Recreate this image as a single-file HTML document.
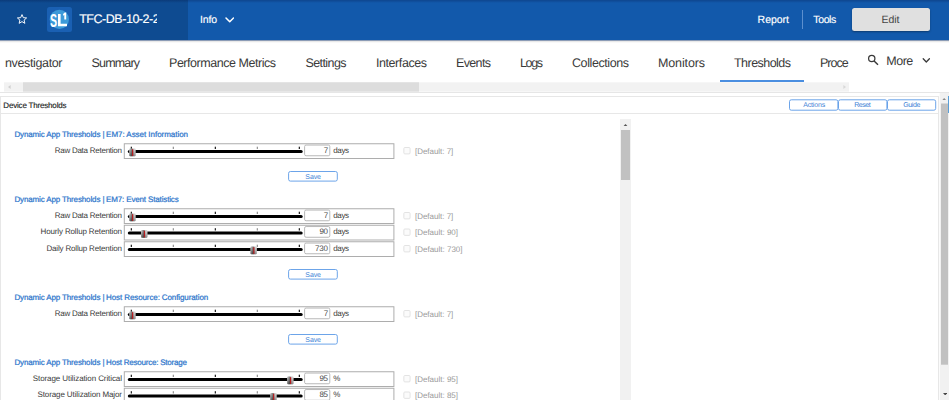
<!DOCTYPE html>
<html><head><meta charset="utf-8">
<style>
html,body{margin:0;padding:0;background:#fff;}
body{width:949px;height:400px;position:relative;overflow:hidden;font-family:"Liberation Sans",sans-serif;}
div{position:absolute;box-sizing:border-box;}
.t{white-space:pre;text-rendering:geometricPrecision;}
.hdr{left:0;top:0;width:949px;height:40px;background:#1259ab;}
.hdrl{left:0;top:0;width:188px;height:40px;background:#0e4b91;}
.hsh{left:0;top:40px;width:949px;height:3px;background:linear-gradient(#8c9cb6 0,#8c9cb6 33.3%,#e9e9e9 33.4%,#e9e9e9 66.6%,#f9f9f9 66.7%);}
.htop{left:0;top:0;width:949px;height:3px;background:linear-gradient(rgba(0,0,40,.22),rgba(0,0,40,0));}
.btn{border:1px solid #4a8fe0;border-radius:2px;background:#fff;}
</style></head>
<body>
<!-- header -->
<div class="hdr"></div><div class="hdrl"></div><div class="htop"></div><div class="hsh"></div>
<!-- star -->
<svg style="position:absolute;left:16px;top:12.8px" width="12" height="12" viewBox="0 0 24 24"><path d="M12 3.2l2.6 6.1 6.6.6-5 4.3 1.5 6.5L12 17.2l-5.7 3.5 1.5-6.5-5-4.3 6.6-.6z" fill="none" stroke="#fff" stroke-width="1.9" stroke-linejoin="round"/></svg>
<!-- logo -->
<div style="left:47px;top:7px;width:24.8px;height:25px;border-radius:2.5px;background:#1a60b3;"></div>
<svg style="position:absolute;left:47px;top:7px" width="25" height="25" viewBox="47 7 25 25">
<circle cx="59.35" cy="19.4" r="9.65" fill="#3d9ad9"/>
<text x="0" y="0" transform="translate(49.9 26.6) scale(0.6 1)" font-family="Liberation Sans, sans-serif" font-weight="700" font-size="17.6" fill="#fff">S</text>
<path d="M58 14h2.6v9.8H67v2.4H58z" fill="#fff"/>
<path d="M63.1 14.1l1.6-1.6h1.5v7h-1.9v-4.6l-1.2.9z" fill="#fff"/>
</svg>
<!-- info chevron -->
<svg style="position:absolute;left:224.5px;top:17px" width="9.5" height="6.2" viewBox="0 0 9.5 6.2"><path d="M1 1l3.75 3.8L8.5 1" fill="none" stroke="#fff" stroke-width="1.5" stroke-linecap="round" stroke-linejoin="round"/></svg>
<!-- divider + edit -->
<div style="left:801.8px;top:10px;width:1px;height:18.6px;background:#5c8fce;"></div>
<div style="left:852px;top:8px;width:77.5px;height:23px;border-radius:2.5px;background:#e0e0e0;box-shadow:0 1px 2px rgba(0,0,0,.35);"></div>
<!-- tab underline -->
<div style="left:720.2px;top:80.2px;width:83.8px;height:2px;background:#4a8ee0;"></div>
<!-- horizontal scrollbar -->
<svg style="position:absolute;left:0;top:80px" width="949" height="14" viewBox="0 80 949 14"><rect x="4" y="82.3" width="845" height="9.3" fill="#f2f2f2"/><rect x="23" y="82.3" width="396" height="9.3" fill="#dddddd"/><rect x="0" y="92" width="949" height="0.9" fill="#e4e4e4"/></svg>
<svg style="position:absolute;left:8.3px;top:85.2px" width="3" height="4" viewBox="0 0 3 4"><path d="M2.6 0L0 2l2.6 2z" fill="#d0d0d0"/></svg>
<svg style="position:absolute;left:842.5px;top:85.2px" width="3" height="4" viewBox="0 0 3 4"><path d="M0.4 0L3 2 .4 4z" fill="#d8d8d8"/></svg>
<!-- search + more chevron -->
<svg style="position:absolute;left:866px;top:53px" width="15" height="14" viewBox="866 53 15 14"><circle cx="871.75" cy="58.55" r="3.15" fill="none" stroke="#3a3a3a" stroke-width="1.25"/><path d="M874.1 60.9l3.9 3.9" stroke="#3a3a3a" stroke-width="1.45" stroke-linecap="butt"/></svg>
<svg style="position:absolute;left:921px;top:57px" width="11" height="8" viewBox="921 57 11 8"><path d="M923.2 58.8l3.1 3.2 3.1-3.2" fill="none" stroke="#3a3a3a" stroke-width="1.3" stroke-linecap="round" stroke-linejoin="round"/></svg>
<!-- lines -->
<div style="left:0px;top:96px;width:939px;height:310px;border:1px solid #e7e7e7;border-bottom:none;"></div>
<div style="left:1px;top:113px;width:937px;height:1px;background:#e7e7e7;"></div>
<!-- top buttons -->
<svg style="position:absolute;left:785px;top:97px" width="155" height="16" viewBox="785 97 155 16">
<rect x="789.5" y="99.8" width="48.4" height="10.4" rx="1.8" fill="#fff" stroke="#5b9ae6" stroke-width="0.9"/>
<rect x="838.5" y="99.8" width="48.4" height="10.4" rx="1.8" fill="#fff" stroke="#5b9ae6" stroke-width="0.9"/>
<rect x="887.5" y="99.8" width="48.2" height="10.4" rx="1.8" fill="#fff" stroke="#5b9ae6" stroke-width="0.9"/>
</svg>
<!-- inner scrollbar -->
<div style="left:620px;top:119px;width:11px;height:290px;background:#f1f1f1;"></div>
<div style="left:621px;top:129.6px;width:9px;height:50.4px;background:#c1c1c1;"></div>
<svg style="position:absolute;left:622.9px;top:123.6px" width="5" height="2.7" viewBox="0 0 5 2.7"><path d="M0 2.7L2.5 0l2.5 2.7z" fill="#555"/></svg>
<!-- outer scrollbar -->
<svg style="position:absolute;left:938px;top:93px" width="11" height="307" viewBox="938 93 11 307"><rect x="939.7" y="93" width="9.3" height="307" fill="#f1f1f1"/></svg>
<svg style="position:absolute;left:940px;top:100px" width="9" height="270" viewBox="940 100 9 270"><rect x="941" y="103.5" width="7" height="261.2" fill="#c1c1c1"/></svg>
<svg style="position:absolute;left:942.4px;top:98px" width="4.4" height="2.4" viewBox="0 0 4.4 2.4"><path d="M0 2.4L2.2 0l2.2 2.4z" fill="#888"/></svg>
<svg style="position:absolute;left:942.8px;top:392.6px" width="4.4" height="2.4" viewBox="0 0 4.4 2.4"><path d="M0 0h4.4L2.2 2.4z" fill="#444"/></svg>
<div style="left:948px;top:95.5px;width:1px;height:17.5px;background:#5a9fd8;"></div>
<svg style="position:absolute;left:0;top:0" width="949" height="400" viewBox="0 0 949 400">
<defs><linearGradient id="hg" x1="0" y1="0" x2="0" y2="1"><stop offset="0" stop-color="#c4c4c4"/><stop offset="0.5" stop-color="#8a8a8a"/><stop offset="1" stop-color="#484848"/></linearGradient><linearGradient id="hh" x1="0" y1="0" x2="1" y2="0"><stop offset="0" stop-color="#fff" stop-opacity="0.25"/><stop offset="0.3" stop-color="#444" stop-opacity="0.35"/><stop offset="0.45" stop-color="#333" stop-opacity="0.5"/><stop offset="0.7" stop-color="#fff" stop-opacity="0.3"/><stop offset="1" stop-color="#fff" stop-opacity="0.45"/></linearGradient></defs>
<rect x="124.3" y="143.75" width="269.6" height="14.75" fill="#fff" stroke="#adadad" stroke-width="1"/>
<rect x="127.8" y="149.95" width="174.9" height="3.15" rx="1.55" fill="#000"/>
<rect x="130.75" y="146.70" width="1.15" height="2.3" fill="#111"/>
<rect x="172.75" y="146.70" width="1.15" height="2.3" fill="#8c8c8c"/>
<rect x="214.75" y="146.70" width="1.15" height="2.3" fill="#111"/>
<rect x="256.75" y="146.70" width="1.15" height="2.3" fill="#8c8c8c"/>
<rect x="298.75" y="146.70" width="1.15" height="2.3" fill="#111"/>
<rect x="129.20" y="148.50" width="6.4" height="7.7" rx="1" fill="url(#hg)"/>
<rect x="129.20" y="148.50" width="6.4" height="7.7" rx="1" fill="url(#hh)"/>
<rect x="132.05" y="149.20" width="1.2" height="6.7" fill="#b81a1d"/>
<rect x="304.6" y="145.05" width="25.2" height="10.7" rx="1.5" fill="#fff" stroke="#b8b8b8" stroke-width="1"/>
<rect x="403.85" y="147.50" width="6.2" height="6.4" rx="1" fill="#fbfbfb" stroke="#e0e0e0" stroke-width="0.9"/>
<rect x="288.6" y="171.50" width="48.7" height="9.6" rx="1.8" fill="#fff" stroke="#5b9ae6" stroke-width="0.9"/>
<rect x="124.3" y="208.75" width="269.6" height="14.75" fill="#fff" stroke="#adadad" stroke-width="1"/>
<rect x="127.8" y="214.95" width="174.9" height="3.15" rx="1.55" fill="#000"/>
<rect x="130.75" y="211.70" width="1.15" height="2.3" fill="#111"/>
<rect x="172.75" y="211.70" width="1.15" height="2.3" fill="#8c8c8c"/>
<rect x="214.75" y="211.70" width="1.15" height="2.3" fill="#111"/>
<rect x="256.75" y="211.70" width="1.15" height="2.3" fill="#8c8c8c"/>
<rect x="298.75" y="211.70" width="1.15" height="2.3" fill="#111"/>
<rect x="129.20" y="213.50" width="6.4" height="7.7" rx="1" fill="url(#hg)"/>
<rect x="129.20" y="213.50" width="6.4" height="7.7" rx="1" fill="url(#hh)"/>
<rect x="132.05" y="214.20" width="1.2" height="6.7" fill="#b81a1d"/>
<rect x="304.6" y="210.05" width="25.2" height="10.7" rx="1.5" fill="#fff" stroke="#b8b8b8" stroke-width="1"/>
<rect x="403.85" y="212.50" width="6.2" height="6.4" rx="1" fill="#fbfbfb" stroke="#e0e0e0" stroke-width="0.9"/>
<rect x="124.3" y="225.25" width="269.6" height="14.75" fill="#fff" stroke="#adadad" stroke-width="1"/>
<rect x="127.8" y="231.45" width="174.9" height="3.15" rx="1.55" fill="#000"/>
<rect x="130.75" y="228.20" width="1.15" height="2.3" fill="#111"/>
<rect x="172.75" y="228.20" width="1.15" height="2.3" fill="#8c8c8c"/>
<rect x="214.75" y="228.20" width="1.15" height="2.3" fill="#111"/>
<rect x="256.75" y="228.20" width="1.15" height="2.3" fill="#8c8c8c"/>
<rect x="298.75" y="228.20" width="1.15" height="2.3" fill="#111"/>
<rect x="141.00" y="230.00" width="6.4" height="7.7" rx="1" fill="url(#hg)"/>
<rect x="141.00" y="230.00" width="6.4" height="7.7" rx="1" fill="url(#hh)"/>
<rect x="143.85" y="230.70" width="1.2" height="6.7" fill="#b81a1d"/>
<rect x="304.6" y="226.55" width="25.2" height="10.7" rx="1.5" fill="#fff" stroke="#b8b8b8" stroke-width="1"/>
<rect x="403.85" y="229.00" width="6.2" height="6.4" rx="1" fill="#fbfbfb" stroke="#e0e0e0" stroke-width="0.9"/>
<rect x="124.3" y="241.75" width="269.6" height="14.75" fill="#fff" stroke="#adadad" stroke-width="1"/>
<rect x="127.8" y="247.95" width="174.9" height="3.15" rx="1.55" fill="#000"/>
<rect x="130.75" y="244.70" width="1.15" height="2.3" fill="#111"/>
<rect x="172.75" y="244.70" width="1.15" height="2.3" fill="#8c8c8c"/>
<rect x="214.75" y="244.70" width="1.15" height="2.3" fill="#111"/>
<rect x="256.75" y="244.70" width="1.15" height="2.3" fill="#8c8c8c"/>
<rect x="298.75" y="244.70" width="1.15" height="2.3" fill="#111"/>
<rect x="250.40" y="246.50" width="6.4" height="7.7" rx="1" fill="url(#hg)"/>
<rect x="250.40" y="246.50" width="6.4" height="7.7" rx="1" fill="url(#hh)"/>
<rect x="253.25" y="247.20" width="1.2" height="6.7" fill="#b81a1d"/>
<rect x="304.6" y="243.05" width="25.2" height="10.7" rx="1.5" fill="#fff" stroke="#b8b8b8" stroke-width="1"/>
<rect x="403.85" y="245.50" width="6.2" height="6.4" rx="1" fill="#fbfbfb" stroke="#e0e0e0" stroke-width="0.9"/>
<rect x="288.6" y="269.50" width="48.7" height="9.6" rx="1.8" fill="#fff" stroke="#5b9ae6" stroke-width="0.9"/>
<rect x="124.3" y="306.75" width="269.6" height="14.75" fill="#fff" stroke="#adadad" stroke-width="1"/>
<rect x="127.8" y="312.95" width="174.9" height="3.15" rx="1.55" fill="#000"/>
<rect x="130.75" y="309.70" width="1.15" height="2.3" fill="#111"/>
<rect x="172.75" y="309.70" width="1.15" height="2.3" fill="#8c8c8c"/>
<rect x="214.75" y="309.70" width="1.15" height="2.3" fill="#111"/>
<rect x="256.75" y="309.70" width="1.15" height="2.3" fill="#8c8c8c"/>
<rect x="298.75" y="309.70" width="1.15" height="2.3" fill="#111"/>
<rect x="129.20" y="311.50" width="6.4" height="7.7" rx="1" fill="url(#hg)"/>
<rect x="129.20" y="311.50" width="6.4" height="7.7" rx="1" fill="url(#hh)"/>
<rect x="132.05" y="312.20" width="1.2" height="6.7" fill="#b81a1d"/>
<rect x="304.6" y="308.05" width="25.2" height="10.7" rx="1.5" fill="#fff" stroke="#b8b8b8" stroke-width="1"/>
<rect x="403.85" y="310.50" width="6.2" height="6.4" rx="1" fill="#fbfbfb" stroke="#e0e0e0" stroke-width="0.9"/>
<rect x="288.6" y="334.50" width="48.7" height="9.6" rx="1.8" fill="#fff" stroke="#5b9ae6" stroke-width="0.9"/>
<rect x="124.3" y="371.75" width="269.6" height="14.75" fill="#fff" stroke="#adadad" stroke-width="1"/>
<rect x="127.8" y="377.95" width="174.9" height="3.15" rx="1.55" fill="#000"/>
<rect x="130.75" y="374.70" width="1.15" height="2.3" fill="#111"/>
<rect x="172.75" y="374.70" width="1.15" height="2.3" fill="#8c8c8c"/>
<rect x="214.75" y="374.70" width="1.15" height="2.3" fill="#111"/>
<rect x="256.75" y="374.70" width="1.15" height="2.3" fill="#8c8c8c"/>
<rect x="298.75" y="374.70" width="1.15" height="2.3" fill="#111"/>
<rect x="287.10" y="376.50" width="6.4" height="7.7" rx="1" fill="url(#hg)"/>
<rect x="287.10" y="376.50" width="6.4" height="7.7" rx="1" fill="url(#hh)"/>
<rect x="289.95" y="377.20" width="1.2" height="6.7" fill="#b81a1d"/>
<rect x="304.6" y="373.05" width="25.2" height="10.7" rx="1.5" fill="#fff" stroke="#b8b8b8" stroke-width="1"/>
<rect x="403.85" y="375.50" width="6.2" height="6.4" rx="1" fill="#fbfbfb" stroke="#e0e0e0" stroke-width="0.9"/>
<rect x="124.3" y="388.25" width="269.6" height="14.75" fill="#fff" stroke="#adadad" stroke-width="1"/>
<rect x="127.8" y="394.45" width="174.9" height="3.15" rx="1.55" fill="#000"/>
<rect x="130.75" y="391.20" width="1.15" height="2.3" fill="#111"/>
<rect x="172.75" y="391.20" width="1.15" height="2.3" fill="#8c8c8c"/>
<rect x="214.75" y="391.20" width="1.15" height="2.3" fill="#111"/>
<rect x="256.75" y="391.20" width="1.15" height="2.3" fill="#8c8c8c"/>
<rect x="298.75" y="391.20" width="1.15" height="2.3" fill="#111"/>
<rect x="270.20" y="393.00" width="6.4" height="7.7" rx="1" fill="url(#hg)"/>
<rect x="270.20" y="393.00" width="6.4" height="7.7" rx="1" fill="url(#hh)"/>
<rect x="273.05" y="393.70" width="1.2" height="6.7" fill="#b81a1d"/>
<rect x="304.6" y="389.55" width="25.2" height="10.7" rx="1.5" fill="#fff" stroke="#b8b8b8" stroke-width="1"/>
<rect x="403.85" y="392.00" width="6.2" height="6.4" rx="1" fill="#fbfbfb" stroke="#e0e0e0" stroke-width="0.9"/>
</svg>
<div class="t" style="left:79.20px;top:13px;font-size:12.5px;line-height:12.5px;color:#ffffff;letter-spacing:-0.469px;-webkit-text-stroke:0.15px #fff;width:77.8px;overflow:hidden;">TFC-DB-10-2-2</div>
<div class="t" style="left:200.00px;top:15px;font-size:10.5px;line-height:10.5px;color:#ffffff;letter-spacing:-0.105px;-webkit-text-stroke:0.15px #fff;">Info</div>
<div class="t" style="left:757.60px;top:15px;font-size:10.5px;line-height:10.5px;color:#ffffff;letter-spacing:-0.043px;-webkit-text-stroke:0.15px #fff;">Report</div>
<div class="t" style="left:813.30px;top:15px;font-size:10.5px;line-height:10.5px;color:#ffffff;letter-spacing:-0.379px;-webkit-text-stroke:0.15px #fff;">Tools</div>
<div class="t" style="left:881.60px;top:15px;font-size:10.5px;line-height:10.5px;color:#444444;letter-spacing:-0.131px;">Edit</div>
<div class="t" style="left:5.00px;top:57px;font-size:12.5px;line-height:12.5px;color:#3a3a3a;letter-spacing:-0.366px;">nvestigator</div>
<div class="t" style="left:91.50px;top:57px;font-size:12.5px;line-height:12.5px;color:#3a3a3a;letter-spacing:-0.831px;">Summary</div>
<div class="t" style="left:169.00px;top:57px;font-size:12.5px;line-height:12.5px;color:#3a3a3a;letter-spacing:-0.462px;">Performance Metrics</div>
<div class="t" style="left:305.50px;top:57px;font-size:12.5px;line-height:12.5px;color:#3a3a3a;letter-spacing:-0.596px;">Settings</div>
<div class="t" style="left:376.00px;top:57px;font-size:12.5px;line-height:12.5px;color:#3a3a3a;letter-spacing:-0.432px;">Interfaces</div>
<div class="t" style="left:456.00px;top:57px;font-size:12.5px;line-height:12.5px;color:#3a3a3a;letter-spacing:-0.644px;">Events</div>
<div class="t" style="left:520.00px;top:57px;font-size:12.5px;line-height:12.5px;color:#3a3a3a;letter-spacing:-1.370px;">Logs</div>
<div class="t" style="left:572.00px;top:57px;font-size:12.5px;line-height:12.5px;color:#3a3a3a;letter-spacing:-0.414px;">Collections</div>
<div class="t" style="left:658.00px;top:57px;font-size:12.5px;line-height:12.5px;color:#3a3a3a;letter-spacing:-0.134px;">Monitors</div>
<div class="t" style="left:734.00px;top:57px;font-size:12.5px;line-height:12.5px;color:#3a3a3a;letter-spacing:-0.538px;">Thresholds</div>
<div class="t" style="left:820.00px;top:57px;font-size:12.5px;line-height:12.5px;color:#3a3a3a;letter-spacing:-0.964px;">Proce</div>
<div class="t" style="left:886.30px;top:55px;font-size:12.5px;line-height:12.5px;color:#3a3a3a;letter-spacing:-0.495px;">More</div>
<div class="t" style="left:3.30px;top:102px;font-size:8px;line-height:8px;color:#222222;letter-spacing:-0.182px;-webkit-text-stroke:0.15px #222;">Device Thresholds</div>
<div class="t" style="left:803.20px;top:102px;font-size:7px;line-height:7px;color:#3d7fd6;letter-spacing:-0.161px;">Actions</div>
<div class="t" style="left:854.20px;top:102px;font-size:7px;line-height:7px;color:#3d7fd6;letter-spacing:-0.449px;">Reset</div>
<div class="t" style="left:903.30px;top:102px;font-size:7px;line-height:7px;color:#3d7fd6;letter-spacing:-0.422px;">Guide</div>
<div class="t" style="left:14.40px;top:131px;font-size:8px;line-height:8px;color:#2c75cb;letter-spacing:-0.133px;-webkit-text-stroke:0.22px #2c75cb;">Dynamic App Thresholds</div>
<div class="t" style="left:102.60px;top:131px;font-size:8px;line-height:8px;color:#2c75cb;letter-spacing:0.000px;-webkit-text-stroke:0.22px #2c75cb;">|</div>
<div class="t" style="left:106.10px;top:131px;font-size:8px;line-height:8px;color:#2c75cb;letter-spacing:-0.038px;-webkit-text-stroke:0.22px #2c75cb;">EM7: Asset Information</div>
<div class="t" style="left:54.70px;top:147px;font-size:8px;line-height:8px;color:#3a3a3a;letter-spacing:-0.253px;">Raw Data Retention</div>
<div class="t" style="left:323.80px;top:147px;font-size:8px;line-height:8px;color:#4a4a4a;letter-spacing:-0.253px;">7</div>
<div class="t" style="left:333.30px;top:147px;font-size:8px;line-height:8px;color:#3a3a3a;letter-spacing:-0.402px;">days</div>
<div class="t" style="left:415.00px;top:148px;font-size:8px;line-height:8px;color:#9a9a9a;letter-spacing:-0.035px;">[Default: 7]</div>
<div class="t" style="left:305.30px;top:174px;font-size:7px;line-height:7px;color:#3d7fd6;letter-spacing:-0.090px;">Save</div>
<div class="t" style="left:14.40px;top:196px;font-size:8px;line-height:8px;color:#2c75cb;letter-spacing:-0.133px;-webkit-text-stroke:0.22px #2c75cb;">Dynamic App Thresholds</div>
<div class="t" style="left:102.60px;top:196px;font-size:8px;line-height:8px;color:#2c75cb;letter-spacing:0.000px;-webkit-text-stroke:0.22px #2c75cb;">|</div>
<div class="t" style="left:106.10px;top:196px;font-size:8px;line-height:8px;color:#2c75cb;letter-spacing:-0.150px;-webkit-text-stroke:0.22px #2c75cb;">EM7: Event Statistics</div>
<div class="t" style="left:54.70px;top:212px;font-size:8px;line-height:8px;color:#3a3a3a;letter-spacing:-0.253px;">Raw Data Retention</div>
<div class="t" style="left:323.80px;top:212px;font-size:8px;line-height:8px;color:#4a4a4a;letter-spacing:-0.253px;">7</div>
<div class="t" style="left:333.30px;top:212px;font-size:8px;line-height:8px;color:#3a3a3a;letter-spacing:-0.402px;">days</div>
<div class="t" style="left:415.00px;top:213px;font-size:8px;line-height:8px;color:#9a9a9a;letter-spacing:-0.035px;">[Default: 7]</div>
<div class="t" style="left:40.50px;top:228px;font-size:8px;line-height:8px;color:#3a3a3a;letter-spacing:-0.136px;">Hourly Rollup Retention</div>
<div class="t" style="left:319.40px;top:228px;font-size:8px;line-height:8px;color:#4a4a4a;letter-spacing:-0.306px;">90</div>
<div class="t" style="left:333.30px;top:228px;font-size:8px;line-height:8px;color:#3a3a3a;letter-spacing:-0.402px;">days</div>
<div class="t" style="left:415.00px;top:229px;font-size:8px;line-height:8px;color:#9a9a9a;letter-spacing:-0.012px;">[Default: 90]</div>
<div class="t" style="left:46.40px;top:245px;font-size:8px;line-height:8px;color:#3a3a3a;letter-spacing:-0.169px;">Daily Rollup Retention</div>
<div class="t" style="left:315.00px;top:245px;font-size:8px;line-height:8px;color:#4a4a4a;letter-spacing:-0.180px;">730</div>
<div class="t" style="left:333.30px;top:245px;font-size:8px;line-height:8px;color:#3a3a3a;letter-spacing:-0.402px;">days</div>
<div class="t" style="left:415.00px;top:246px;font-size:8px;line-height:8px;color:#9a9a9a;letter-spacing:-0.007px;">[Default: 730]</div>
<div class="t" style="left:305.30px;top:272px;font-size:7px;line-height:7px;color:#3d7fd6;letter-spacing:-0.090px;">Save</div>
<div class="t" style="left:14.40px;top:294px;font-size:8px;line-height:8px;color:#2c75cb;letter-spacing:-0.133px;-webkit-text-stroke:0.22px #2c75cb;">Dynamic App Thresholds</div>
<div class="t" style="left:102.60px;top:294px;font-size:8px;line-height:8px;color:#2c75cb;letter-spacing:0.000px;-webkit-text-stroke:0.22px #2c75cb;">|</div>
<div class="t" style="left:106.10px;top:294px;font-size:8px;line-height:8px;color:#2c75cb;letter-spacing:-0.106px;-webkit-text-stroke:0.22px #2c75cb;">Host Resource: Configuration</div>
<div class="t" style="left:54.70px;top:310px;font-size:8px;line-height:8px;color:#3a3a3a;letter-spacing:-0.253px;">Raw Data Retention</div>
<div class="t" style="left:323.80px;top:310px;font-size:8px;line-height:8px;color:#4a4a4a;letter-spacing:-0.253px;">7</div>
<div class="t" style="left:333.30px;top:310px;font-size:8px;line-height:8px;color:#3a3a3a;letter-spacing:-0.402px;">days</div>
<div class="t" style="left:415.00px;top:311px;font-size:8px;line-height:8px;color:#9a9a9a;letter-spacing:-0.035px;">[Default: 7]</div>
<div class="t" style="left:305.30px;top:337px;font-size:7px;line-height:7px;color:#3d7fd6;letter-spacing:-0.090px;">Save</div>
<div class="t" style="left:14.40px;top:359px;font-size:8px;line-height:8px;color:#2c75cb;letter-spacing:-0.133px;-webkit-text-stroke:0.22px #2c75cb;">Dynamic App Thresholds</div>
<div class="t" style="left:102.60px;top:359px;font-size:8px;line-height:8px;color:#2c75cb;letter-spacing:0.000px;-webkit-text-stroke:0.22px #2c75cb;">|</div>
<div class="t" style="left:106.10px;top:359px;font-size:8px;line-height:8px;color:#2c75cb;letter-spacing:-0.218px;-webkit-text-stroke:0.22px #2c75cb;">Host Resource: Storage</div>
<div class="t" style="left:32.80px;top:375px;font-size:8px;line-height:8px;color:#3a3a3a;letter-spacing:-0.089px;">Storage Utilization Critical</div>
<div class="t" style="left:319.40px;top:375px;font-size:8px;line-height:8px;color:#4a4a4a;letter-spacing:-0.306px;">95</div>
<div class="t" style="left:333.30px;top:375px;font-size:8px;line-height:8px;color:#3a3a3a;letter-spacing:-1.125px;">%</div>
<div class="t" style="left:415.00px;top:376px;font-size:8px;line-height:8px;color:#9a9a9a;letter-spacing:-0.012px;">[Default: 95]</div>
<div class="t" style="left:37.50px;top:391px;font-size:8px;line-height:8px;color:#3a3a3a;letter-spacing:-0.111px;">Storage Utilization Major</div>
<div class="t" style="left:319.40px;top:391px;font-size:8px;line-height:8px;color:#4a4a4a;letter-spacing:-0.306px;">85</div>
<div class="t" style="left:333.30px;top:391px;font-size:8px;line-height:8px;color:#3a3a3a;letter-spacing:-1.125px;">%</div>
<div class="t" style="left:415.00px;top:392px;font-size:8px;line-height:8px;color:#9a9a9a;letter-spacing:-0.012px;">[Default: 85]</div>
</body></html>
